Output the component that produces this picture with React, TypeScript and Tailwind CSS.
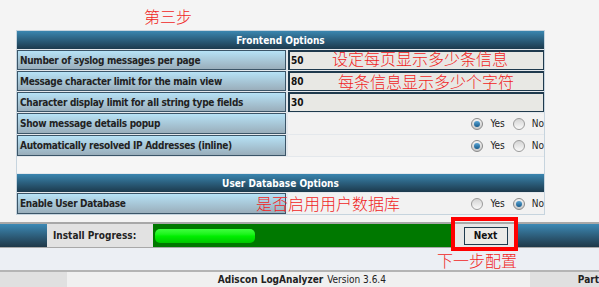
import React from "react";

const FONT = '"DejaVu Sans Condensed", "DejaVu Sans", "Noto Sans CJK SC", sans-serif';
const CJK = '"Noto Sans CJK SC", "Noto Sans", sans-serif';

function Radio({ checked }: { checked: boolean }) {
  return checked ? (
    <span className="inline-flex h-[12px] w-[12px] items-center justify-center rounded-full border border-[#8a8a8a] bg-gradient-to-b from-[#f4f4f4] to-[#c8c8c8]">
      <span className="h-[6px] w-[6px] rounded-full bg-gradient-to-b from-[#5aa6d6] to-[#145a8a]" />
    </span>
  ) : (
    <span className="inline-block h-[12px] w-[12px] rounded-full border border-[#9a9a9a] bg-gradient-to-b from-[#d4d4d4] to-[#fafafa]" />
  );
}

function YesNo({ yes }: { yes: boolean }) {
  return (
    <div className="flex h-full items-center justify-end bg-[#f2f2f2] text-[10px] text-[#222]">
      <Radio checked={yes} />
      <span className="ml-[7px] mr-[8px]">Yes</span>
      <Radio checked={!yes} />
      <span className="ml-[7px]">No</span>
    </div>
  );
}

function Label({ text }: { text: string }) {
  return (
    <div className="flex h-full items-center border border-[#3b5568] bg-gradient-to-b from-[#b6e2f6] to-[#9aaebb] pl-[2px] text-[10px] font-bold tracking-[-0.3px] text-[#222]">
      {text}
    </div>
  );
}

function InputVal({ value, note, noteLeft, noteTop }: { value: string; note?: string; noteLeft?: number; noteTop?: number }) {
  return (
    <div className="relative flex h-full items-center border border-[#1f3a4d] border-t-2 border-l-2 bg-[#e8e8e4] pl-[1px] text-[10px] font-bold text-[#111]">
      {value}
      {note ? (
        <span
          className="absolute text-[16px] font-light leading-[18px] text-[#f01e1e]"
          style={{ left: noteLeft, top: noteTop, fontFamily: CJK }}
        >
          {note}
        </span>
      ) : null}
    </div>
  );
}

function Header({ title }: { title: string }) {
  return (
    <div className="flex h-[18px] items-center justify-center bg-gradient-to-b from-[#3a86b0] to-[#1c3a4d] text-[10px] font-bold text-white">
      {title}
    </div>
  );
}

export default function App() {
  return (
    <div className="relative h-[287px] w-[599px] overflow-hidden bg-[#f4f4f4]" style={{ fontFamily: FONT }}>
      <div className="h-[30px] pl-[144px] pt-[5px] text-[16px] font-light leading-[22px] text-[#f01e1e]" style={{ fontFamily: CJK }}>
        第三步
      </div>

      <div className="ml-[16px] flex w-[529px] flex-col gap-[1px] border border-[#c6d4de] bg-[#e4e8ec]">
        <Header title="Frontend Options" />
        <div className="grid h-[20px] grid-cols-[269px_1fr] gap-[2px]">
          <Label text="Number of syslog messages per page" />
          <InputVal value="50" note="设定每页显示多少条信息" noteLeft={42} noteTop={-3} />
        </div>
        <div className="grid h-[20px] grid-cols-[269px_1fr] gap-[2px]">
          <Label text="Message character limit for the main view" />
          <InputVal value="80" note="每条信息显示多少个字符" noteLeft={48} noteTop={-1} />
        </div>
        <div className="grid h-[20px] grid-cols-[269px_1fr] gap-[2px]">
          <Label text="Character display limit for all string type fields" />
          <InputVal value="30" />
        </div>
        <div className="grid h-[21px] grid-cols-[269px_1fr] gap-[2px]">
          <Label text="Show message details popup" />
          <YesNo yes />
        </div>
        <div className="grid h-[21px] grid-cols-[269px_1fr] gap-[2px]">
          <Label text="Automatically resolved IP Addresses (inline)" />
          <YesNo yes />
        </div>
        <div className="h-[16px] bg-[#f6f6f6]" />
        <Header title="User Database Options" />
        <div className="grid h-[21px] grid-cols-[269px_1fr] gap-[2px]">
          <Label text="Enable User Database" />
          <div className="relative h-full">
            <YesNo yes={false} />
            <span
              className="absolute left-[-32px] top-[1px] text-[16px] font-light leading-[18px] text-[#f01e1e]"
              style={{ fontFamily: CJK }}
            >
              是否启用用户数据库
            </span>
          </div>
        </div>
      </div>

      <div className="mt-[7px] flex h-[26px] border-y-2 border-[#a8a8a8] border-b">
        <div className="w-[47px] bg-gradient-to-b from-[#3c8ab6] to-[#1f3848]" />
        <div className="flex w-[106px] items-center bg-[#e2e2e2] pl-[6px] text-[10px] font-bold text-[#222]">
          Install Progress:
        </div>
        <div className="flex w-[300px] items-center bg-[#007800] px-[2px]">
          <div className="h-[14px] w-[100px] rounded-[5px] bg-gradient-to-b from-[#3cff3c] via-[#00f000] to-[#00c800]" />
        </div>
        <div className="flex w-[65px] items-center justify-center bg-[#e6e6e6]">
          <div className="flex h-[18px] w-[44px] items-center justify-center border border-[#1f3a4d] bg-[#ecebe8] text-[10px] font-bold text-[#111]">
            Next
          </div>
        </div>
        <div className="flex-1 bg-gradient-to-b from-[#3c8ab6] to-[#1f3848]" />
      </div>

      <div className="h-[22px] bg-[#eceff4] pl-[437px] pt-[2px] text-[16px] font-light leading-[20px] text-[#f01e1e]" style={{ fontFamily: CJK }}>
        下一步配置
      </div>

      <div className="flex h-[17px] border-t-2 border-[#b4b4b4] text-[10px] text-[#222]">
        <div className="w-[67px] bg-[#e0e0e0]" />
        <div className="flex w-[464px] items-center bg-[#f0f0f0] pl-[151px]">
          <span className="font-bold">Adiscon LogAnalyzer</span>
          <span className="ml-[4px]">Version 3.6.4</span>
        </div>
        <div className="flex flex-1 items-center bg-[#e0e0e0] pl-[48px] font-bold">Part</div>
      </div>

      <div className="absolute left-[451px] top-[217px] h-[34px] w-[67px] border-4 border-[#ff0000]" />
    </div>
  );
}
